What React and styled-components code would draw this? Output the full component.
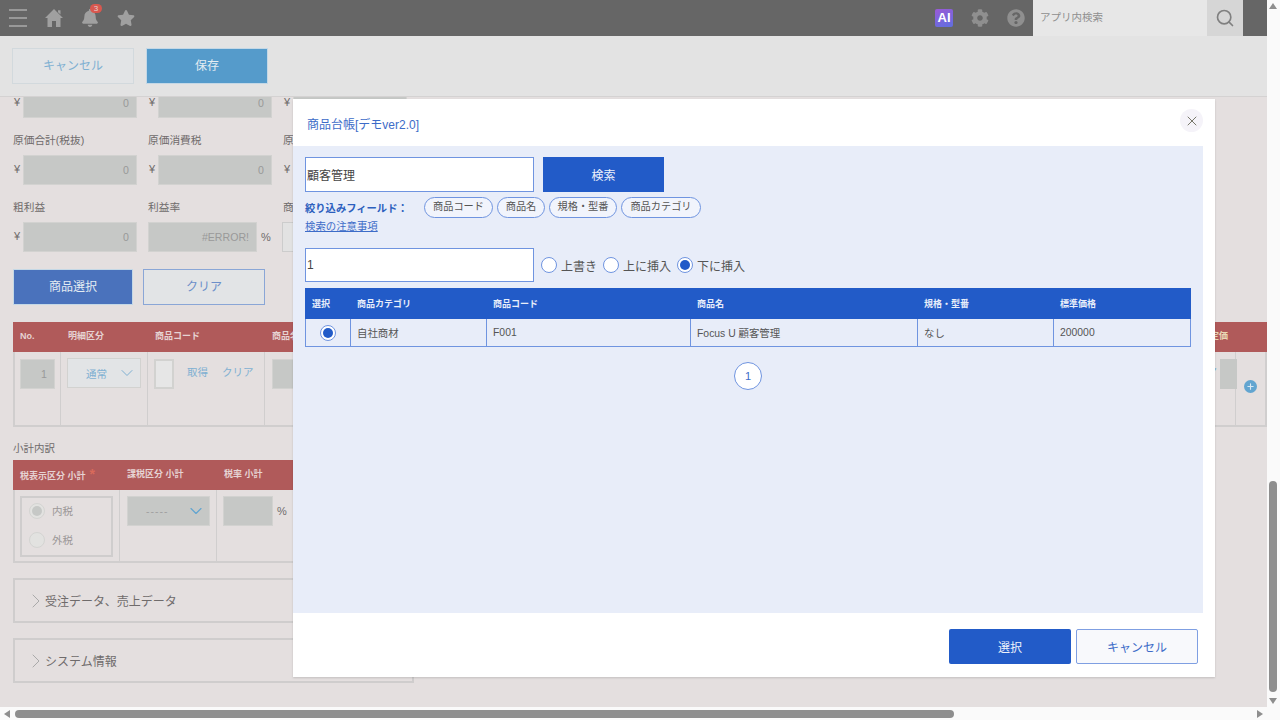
import React from "react";
import styled, { createGlobalStyle } from "styled-components";
import { FaBell, FaCog, FaQuestionCircle, FaStar } from "react-icons/fa";
import { ChevronDown, ChevronRight, Plus, Search, X } from "lucide-react";

const FONT = `"Liberation Sans", "Noto Sans CJK JP", sans-serif`;

const GlobalStyle = createGlobalStyle`
  html, body {
    margin: 0;
    padding: 0;
    height: 100%;
    overflow: hidden;
    font-family: ${FONT};
  }
  * {
    box-sizing: border-box;
  }
`;

const Shell = styled.div`
  position: relative;
  width: 1280px;
  height: 720px;
  display: grid;
  grid-template-columns: 1267px 13px;
  grid-template-rows: 707px 13px;
  background: #fafafa;
`;
const Main = styled.div`
  display: flex;
  flex-direction: column;
  overflow: hidden;
  background: #e4dfdf;
`;

const TopBar = styled.header`
  height: 36px;
  flex: none;
  display: flex;
  align-items: center;
  background: #666;
  color: #a0a0a0;
`;
const Burger = styled.span`
  width: 18px;
  height: 18px;
  margin-left: 9px;
  border-top: 2px solid #999;
  border-bottom: 2px solid #999;
  position: relative;
  &::after {
    content: "";
    position: absolute;
    left: 0;
    right: 0;
    top: 6px;
    height: 2px;
    background: #999;
  }
`;
const NavIcons = styled.div`
  display: flex;
  align-items: center;
  gap: 18px;
  margin-left: 18px;
  font-size: 18px;
`;
const BellWrap = styled.span`
  position: relative;
  display: flex;
`;
const Badge = styled.span`
  position: absolute;
  top: -5px;
  right: -3px;
  width: 12px;
  height: 9px;
  border-radius: 5px;
  background: #d9584f;
  color: #e8d0d0;
  font-size: 8px;
  line-height: 9px;
  text-align: center;
`;
const Spacer = styled.div`
  flex: 1;
`;
const AiBadge = styled.span`
  width: 18px;
  height: 18px;
  border-radius: 2px;
  background: linear-gradient(160deg, #9a5ad6, #5f6fe0);
  color: #fff;
  font-size: 13px;
  font-weight: 700;
  line-height: 18px;
  text-align: center;
`;
const ToolIcons = styled.div`
  display: flex;
  align-items: center;
  gap: 18px;
  margin-right: 8px;
  font-size: 18px;
  color: #8f8f8f;
`;
const SearchInput = styled.div`
  width: 174px;
  height: 36px;
  padding-left: 7px;
  background: #e7e7e7;
  color: #8f8f8f;
  font-size: 10.5px;
  line-height: 34px;
`;
const SearchButton = styled.div`
  width: 36px;
  height: 36px;
  margin-right: 24px;
  display: flex;
  align-items: center;
  justify-content: center;
  background: #d6d6d6;
  color: #808080;
`;

const ActionBar = styled.div`
  height: 61px;
  flex: none;
  display: flex;
  gap: 12px;
  padding: 12px 12px 0;
  background: #e3e3e3;
  border-bottom: 1px solid #d4d2d2;
  position: relative;
  z-index: 1;
`;
const Button = styled.button`
  width: ${(p) => p.$w || 122}px;
  height: 36px;
  padding: 0 0 3px;
  border: ${(p) => (p.$fill ? "1px solid #c4d8e6" : `1px solid ${p.$line || "#d2d9dd"}`)};
  background: ${(p) => p.$fill || "#e2e4e6"};
  color: ${(p) => (p.$fill ? "#e4ecf2" : p.$color || "#7fb0d2")};
  font-family: ${FONT};
  font-size: 12px;
`;

const Content = styled.div`
  flex: 1;
  min-height: 0;
  overflow: hidden;
  padding-left: 13px;
  color: #6f6b6b;
  font-size: 11px;
`;
const FieldGrid = styled.div`
  margin-top: -33px;
  display: grid;
  grid-template-columns: 135px 135px 135px;
  row-gap: 13px;
`;
const Field = styled.div`
  display: flex;
  flex-direction: column;
`;
const FieldLabel = styled.label`
  height: 18px;
  margin-bottom: 6px;
  font-size: 10.7px;
  line-height: 19px;
  white-space: nowrap;
`;
const FieldRow = styled.div`
  display: flex;
  align-items: center;
  height: 30px;
`;
const Yen = styled.span`
  width: 10px;
  padding-left: 1px;
  font-size: 11px;
  margin-top: -2px;
`;
const ReadOnly = styled.div`
  width: ${(p) => p.$w || 114}px;
  height: 30px;
  flex: none;
  padding-right: 7px;
  background: #c6c8c6;
  border: 1px solid #d2d2d0;
  color: #999;
  font-size: 10.6px;
  line-height: 28px;
  text-align: right;
`;
const Percent = styled.span`
  margin-left: 4px;
  font-size: 11px;
  line-height: 30px;
`;
const EmptyField = styled.div`
  width: 114px;
  height: 30px;
  margin-left: -1px;
  background: #e2e2e2;
  border: 1px solid #ccc;
`;

const PickRow = styled.div`
  display: flex;
  gap: 10px;
  margin-top: 17px;
`;

const RedTable = styled.div`
  width: ${(p) => p.$w}px;
  margin-top: ${(p) => p.$top || 0}px;
  display: grid;
  grid-template-columns: ${(p) => p.$cols};
  border-left: 2px solid #d0cece;
  border-right: 2px solid #d0cece;
  border-bottom: 2px solid #d0cece;
`;
const HeadCell = styled.div`
  height: 30px;
  padding-left: 7px;
  margin-right: ${(p) => p.$pull || 0}px;
  margin-left: ${(p) => (p.$first ? -2 : 0)}px;
  background: #b05a5a;
  color: #e6d3d3;
  font-size: 9px;
  font-weight: 700;
  line-height: 29px;
  white-space: nowrap;
  overflow: hidden;
`;
const HeadRight = styled.span`
  float: right;
  margin-right: 8px;
  color: #e9d8b4;
`;
const Req = styled.span`
  margin-left: 4px;
  color: #d96a5a;
  font-size: 14px;
`;
const BodyCell = styled.div`
  height: ${(p) => p.$h}px;
  padding: ${(p) => p.$pt || 6}px 6px 0 ${(p) => p.$pl || 6}px;
  border-right: ${(p) => (p.$last ? "none" : "1px solid #d0cece")};
  display: flex;
  align-items: flex-start;
`;
const Select = styled.div`
  width: ${(p) => p.$w}px;
  height: 30px;
  display: flex;
  align-items: center;
  justify-content: space-between;
  padding: 0 3px 0 18px;
  background: ${(p) => p.$bg};
  border: 1px solid #d2d2d0;
  color: ${(p) => p.$color};
  font-size: 10.5px;
  letter-spacing: ${(p) => p.$spread || 0}px;
`;
const SmallInput = styled.div`
  width: 20px;
  height: 30px;
  background: #e6e6e6;
  border: 2px solid #d2d2d0;
`;
const TextLink = styled.a`
  color: #7fb0d2;
  font-size: 10.5px;
  line-height: 26px;
  margin-left: ${(p) => p.$left}px;
  white-space: nowrap;
`;
const ClippedLink = styled(TextLink)`
  margin-left: auto;
  margin-right: 12px;
`;
const RightCell = styled.div`
  position: relative;
  display: flex;
  justify-content: center;
  align-items: center;
  height: 73px;
  padding-bottom: 4px;
`;
const RightInput = styled.div`
  position: absolute;
  top: 7px;
  left: -16px;
  width: 17px;
  height: 30px;
  background: #c6c8c6;
`;
const PlusDot = styled.span`
  width: 13px;
  height: 13px;
  border-radius: 50%;
  display: flex;
  align-items: center;
  justify-content: center;
  background: #62a5d0;
  color: #d8e8f2;
`;
const SectionLabel = styled.div`
  margin: 12px 0 3px;
  height: 18px;
  font-size: 10.5px;
  line-height: 18px;
`;
const RadioBox = styled.div`
  width: 94px;
  height: 61px;
  display: flex;
  flex-direction: column;
  justify-content: center;
  gap: 13px;
  padding: 0 0 3px 7px;
  border: 2px solid #cfcdcd;
`;
const RadioLine = styled.div`
  display: flex;
  align-items: center;
  gap: 7px;
  color: #9b9797;
  font-size: 10.5px;
`;
const GreyRadio = styled.span`
  width: 16px;
  height: 16px;
  border-radius: 50%;
  display: flex;
  align-items: center;
  justify-content: center;
  background: #e2e2e0;
  border: 1px solid #d4d4d2;
  &::after {
    content: "";
    width: 10px;
    height: 10px;
    border-radius: 50%;
    background: ${(p) => (p.$on ? "#c6c8c6" : "transparent")};
  }
`;
const Accordion = styled.div`
  width: 401px;
  height: 45px;
  margin-top: 15px;
  display: flex;
  align-items: center;
  padding-left: 9px;
  border: 2px solid #cfcdcd;
  font-size: 12px;
  color: #6f6b6b;
  svg {
    margin-right: -3px;
  }
`;

const VBar = styled.div`
  position: relative;
  display: flex;
  justify-content: center;
  padding-top: 481px;
  padding-right: 1px;
`;
const HBar = styled.div`
  position: relative;
  padding: 3px 0 0 15px;
`;
const VThumb = styled.div`
  width: 8px;
  height: 211px;
  border-radius: 4px;
  background: #8e8e8e;
`;
const HThumb = styled.div`
  width: 939px;
  height: 8px;
  border-radius: 4px;
  background: #8e8e8e;
`;
const Arrow = styled.span`
  position: absolute;
  width: 0;
  height: 0;
  ${(p) =>
    ({
      up: "top:3px;left:2px;border:4px solid transparent;border-top:0;border-bottom:6px solid #8e8e8e;",
      down: "bottom:3px;left:2px;border:4px solid transparent;border-bottom:0;border-top:6px solid #8e8e8e;",
      left: "left:4px;top:3px;border:4px solid transparent;border-left:0;border-right:6px solid #8e8e8e;",
      right: "right:4px;top:3px;border:4px solid transparent;border-right:0;border-left:6px solid #8e8e8e;",
    })[p.$dir]}
`;

const Modal = styled.section`
  position: absolute;
  left: 293px;
  top: 99px;
  z-index: 2;
  width: 922px;
  height: 578px;
  display: flex;
  flex-direction: column;
  background: #fff;
  box-shadow: 0 1px 2px rgba(0, 0, 0, 0.15);
`;
const ModalHeader = styled.div`
  height: 47px;
  flex: none;
  display: flex;
  align-items: center;
  justify-content: space-between;
  padding: 0 12px 4px 14px;
`;
const ModalTitle = styled.h2`
  margin: 6px 0 0;
  color: #3d6cc8;
  font-size: 12px;
  font-weight: 400;
`;
const CloseButton = styled.span`
  width: 23px;
  height: 23px;
  border-radius: 50%;
  display: flex;
  align-items: center;
  justify-content: center;
  background: #f5f3f9;
  color: #77776a;
`;
const ModalBody = styled.div`
  flex: 1;
  margin-right: 12px;
  padding: 11px 12px 0;
  background: #e8edf9;
  color: #555;
`;
const TextInput = styled.input`
  width: 229px;
  height: ${(p) => p.$h}px;
  padding: 0 1px;
  border: 1px solid #6f94e0;
  background: #fff;
  color: #444;
  font-family: ${FONT};
  font-size: 12px;
  outline: none;
`;
const SearchRow = styled.div`
  display: flex;
  gap: 9px;
`;
const BlueButton = styled.button`
  width: ${(p) => p.$w}px;
  height: 35px;
  padding: 0 0 1px;
  border: none;
  border-radius: ${(p) => p.$round || 0}px;
  background: #225bc8;
  color: #eef2fb;
  font-family: ${FONT};
  font-size: 12px;
`;
const FilterRow = styled.div`
  display: flex;
  align-items: center;
  height: 21px;
  margin-top: 5px;
`;
const FilterLabel = styled.span`
  width: 119px;
  color: #2c5fbe;
  font-size: 10.3px;
  font-weight: 700;
  white-space: nowrap;
`;
const Chips = styled.div`
  display: flex;
  gap: 4px;
`;
const Chip = styled.span`
  width: ${(p) => p.$w}px;
  height: 21px;
  border: 1px solid #6f94e0;
  border-radius: 11px;
  background: #f1f4fc;
  color: #555;
  font-size: 10.2px;
  line-height: 18px;
  text-align: center;
  white-space: nowrap;
`;
const NoteLink = styled.a`
  display: block;
  height: 16px;
  margin-top: 1px;
  color: #3d6cc8;
  font-size: 10.4px;
  line-height: 16px;
  text-decoration: underline;
`;
const InsertRow = styled.div`
  display: flex;
  align-items: center;
  margin-top: 13px;
`;
const RadioGroup = styled.div`
  display: flex;
  align-items: center;
  gap: 6px;
  margin-left: 7px;
`;
const RadioItem = styled.label`
  display: flex;
  align-items: center;
  gap: 4px;
  color: #555;
  font-size: 12px;
  white-space: nowrap;
`;
const Radio = styled.span`
  width: 16px;
  height: 16px;
  flex: none;
  border-radius: 50%;
  display: inline-flex;
  align-items: center;
  justify-content: center;
  border: 1px solid #6f94e0;
  background: #fff;
  &::after {
    content: "";
    width: 10px;
    height: 10px;
    border-radius: 50%;
    background: ${(p) => (p.$on ? "#225bc8" : "transparent")};
  }
`;
const ResultTable = styled.table`
  width: 885px;
  margin-top: 6px;
  table-layout: fixed;
  border-collapse: collapse;
  th {
    height: 30px;
    padding: 0 6px;
    background: #225bc8;
    border: 1px solid #225bc8;
    color: #e8eefa;
    font-size: 9px;
    font-weight: 700;
    text-align: left;
  }
  td {
    height: 28px;
    padding: 0 6px;
    border: 1px solid #6f94e0;
    color: #555;
    font-size: 10.4px;
  }
`;
const RadioCell = styled.td`
  && {
    padding: 0;
    text-align: center;
  }
  span {
    vertical-align: middle;
  }
`;
const Pager = styled.div`
  margin-top: 15px;
  display: flex;
  justify-content: center;
`;
const PageDot = styled.span`
  width: 28px;
  height: 28px;
  border-radius: 50%;
  border: 1px solid #6f94e0;
  background: #fff;
  color: #3d6cc8;
  font-size: 11px;
  line-height: 26px;
  text-align: center;
`;
const ModalFooter = styled.div`
  height: 64px;
  flex: none;
  display: flex;
  justify-content: flex-end;
  gap: 5px;
  padding: 16px 17px 0 0;
`;
const GhostButton = styled.button`
  width: 122px;
  height: 35px;
  padding: 0;
  border: 1px solid #7f9fe2;
  border-radius: 2px;
  background: #f8f9fc;
  color: #3d6cc8;
  font-family: ${FONT};
  font-size: 12px;
`;

const HomeIcon = () => (
  <svg width="18" height="18" viewBox="0 0 18 18" fill="currentColor">
    <path d="M9 0 18 9H15.5V18H11V12H7V18H2.5V9H0ZM13 1.2H15.5V5.6L13 3.2Z" />
  </svg>
);

const App = () => {
  return (
    <Shell>
      <GlobalStyle />
      <Main>
        <TopBar>
          <Burger />
          <NavIcons>
            <HomeIcon />
            <BellWrap>
              <FaBell />
              <Badge>3</Badge>
            </BellWrap>
            <FaStar />
          </NavIcons>
          <Spacer />
          <ToolIcons>
            <AiBadge>AI</AiBadge>
            <FaCog />
            <FaQuestionCircle />
          </ToolIcons>
          <SearchInput>アプリ内検索</SearchInput>
          <SearchButton>
            <Search size={20} strokeWidth={2} />
          </SearchButton>
        </TopBar>
        <ActionBar>
          <Button>キャンセル</Button>
          <Button $fill="#559bcb">保存</Button>
        </ActionBar>
        <Content>
          <FieldGrid>
            <Field>
              <FieldLabel />
              <FieldRow>
                <Yen>¥</Yen>
                <ReadOnly>0</ReadOnly>
              </FieldRow>
            </Field>
            <Field>
              <FieldLabel />
              <FieldRow>
                <Yen>¥</Yen>
                <ReadOnly>0</ReadOnly>
              </FieldRow>
            </Field>
            <Field>
              <FieldLabel />
              <FieldRow>
                <Yen>¥</Yen>
                <ReadOnly>0</ReadOnly>
              </FieldRow>
            </Field>
            <Field>
              <FieldLabel>原価合計(税抜)</FieldLabel>
              <FieldRow>
                <Yen>¥</Yen>
                <ReadOnly>0</ReadOnly>
              </FieldRow>
            </Field>
            <Field>
              <FieldLabel>原価消費税</FieldLabel>
              <FieldRow>
                <Yen>¥</Yen>
                <ReadOnly>0</ReadOnly>
              </FieldRow>
            </Field>
            <Field>
              <FieldLabel>原価合計</FieldLabel>
              <FieldRow>
                <Yen>¥</Yen>
                <ReadOnly>0</ReadOnly>
              </FieldRow>
            </Field>
            <Field>
              <FieldLabel>粗利益</FieldLabel>
              <FieldRow>
                <Yen>¥</Yen>
                <ReadOnly>0</ReadOnly>
              </FieldRow>
            </Field>
            <Field>
              <FieldLabel>利益率</FieldLabel>
              <FieldRow>
                <ReadOnly $w={109}>#ERROR!</ReadOnly>
                <Percent>%</Percent>
              </FieldRow>
            </Field>
            <Field>
              <FieldLabel>商品</FieldLabel>
              <FieldRow>
                <EmptyField />
              </FieldRow>
            </Field>
          </FieldGrid>

          <PickRow>
            <Button $fill="#4a72bc" $w={120}>
              商品選択
            </Button>
            <Button $line="#8aa6d6" $color="#6c8fc9">
              クリア
            </Button>
          </PickRow>

          <RedTable $w={1254} $top={17} $cols="46px 87px 117px 1fr 29px">
            <HeadCell $first>No.</HeadCell>
            <HeadCell>明細区分</HeadCell>
            <HeadCell>商品コード</HeadCell>
            <HeadCell>
              商品名
              <HeadRight>定価</HeadRight>
            </HeadCell>
            <HeadCell $pull={-2} />
            <BodyCell $h={73} $pt={7} $pl={5}>
              <ReadOnly $w={35}>1</ReadOnly>
            </BodyCell>
            <BodyCell $h={73} $pt={6}>
              <Select $w={75} $bg="#e2e4e6" $color="#7fb0d2">
                通常
                <ChevronDown size={20} strokeWidth={1.2} />
              </Select>
            </BodyCell>
            <BodyCell $h={73} $pt={7}>
              <SmallInput />
              <TextLink $left={13}>取得</TextLink>
              <TextLink $left={14}>クリア</TextLink>
            </BodyCell>
            <BodyCell $h={73} $pt={7} $pl={7}>
              <ReadOnly $w={60} />
              <ClippedLink>クリア</ClippedLink>
            </BodyCell>
            <RightCell>
              <RightInput />
              <PlusDot>
                <Plus size={9} strokeWidth={3} />
              </PlusDot>
            </RightCell>
          </RedTable>

          <SectionLabel>小計内訳</SectionLabel>
          <RedTable $w={401} $cols="105px 97px 1fr">
            <HeadCell $first>
              税表示区分 小計<Req>*</Req>
            </HeadCell>
            <HeadCell>課税区分 小計</HeadCell>
            <HeadCell>税率 小計</HeadCell>
            <BodyCell $h={71} $pl={5}>
              <RadioBox>
                <RadioLine>
                  <GreyRadio $on />
                  内税
                </RadioLine>
                <RadioLine>
                  <GreyRadio />
                  外税
                </RadioLine>
              </RadioBox>
            </BodyCell>
            <BodyCell $h={71} $pl={7}>
              <Select $w={84} $bg="#c6c8c6" $color="#a0a0a0" $spread={1}>
                -----
                <ChevronDown size={20} strokeWidth={1.4} color="#62a5d0" />
              </Select>
            </BodyCell>
            <BodyCell $h={71} $last>
              <ReadOnly $w={50} />
              <Percent>%</Percent>
            </BodyCell>
          </RedTable>

          <Accordion>
            <ChevronRight size={24} strokeWidth={1} color="#aaa" />
            受注データ、売上データ
          </Accordion>
          <Accordion>
            <ChevronRight size={24} strokeWidth={1} color="#aaa" />
            システム情報
          </Accordion>
        </Content>
      </Main>

      <VBar>
        <Arrow $dir="up" />
        <VThumb />
        <Arrow $dir="down" />
      </VBar>
      <HBar>
        <Arrow $dir="left" />
        <HThumb />
        <Arrow $dir="right" />
      </HBar>
      <div />

      <Modal>
        <ModalHeader>
          <ModalTitle>商品台帳[デモver2.0]</ModalTitle>
          <CloseButton>
            <X size={16} strokeWidth={1.5} />
          </CloseButton>
        </ModalHeader>
        <ModalBody>
          <SearchRow>
            <TextInput $h={35} readOnly value="顧客管理" />
            <BlueButton $w={121}>検索</BlueButton>
          </SearchRow>
          <FilterRow>
            <FilterLabel>絞り込みフィールド：</FilterLabel>
            <Chips>
              <Chip $w={69}>商品コード</Chip>
              <Chip $w={48}>商品名</Chip>
              <Chip $w={68}>規格・型番</Chip>
              <Chip $w={80}>商品カテゴリ</Chip>
            </Chips>
          </FilterRow>
          <NoteLink>検索の注意事項</NoteLink>
          <InsertRow>
            <TextInput $h={34} readOnly value="1" />
            <RadioGroup>
              <RadioItem>
                <Radio />
                上書き
              </RadioItem>
              <RadioItem>
                <Radio />
                上に挿入
              </RadioItem>
              <RadioItem>
                <Radio $on />
                下に挿入
              </RadioItem>
            </RadioGroup>
          </InsertRow>
          <ResultTable>
            <colgroup>
              <col width="45" />
              <col width="136" />
              <col width="204" />
              <col width="227" />
              <col width="136" />
              <col width="137" />
            </colgroup>
            <thead>
              <tr>
                <th>選択</th>
                <th>商品カテゴリ</th>
                <th>商品コード</th>
                <th>商品名</th>
                <th>規格・型番</th>
                <th>標準価格</th>
              </tr>
            </thead>
            <tbody>
              <tr>
                <RadioCell>
                  <Radio $on />
                </RadioCell>
                <td>自社商材</td>
                <td>F001</td>
                <td>Focus U 顧客管理</td>
                <td>なし</td>
                <td>200000</td>
              </tr>
            </tbody>
          </ResultTable>
          <Pager>
            <PageDot>1</PageDot>
          </Pager>
        </ModalBody>
        <ModalFooter>
          <BlueButton $w={122} $round={2}>
            選択
          </BlueButton>
          <GhostButton>キャンセル</GhostButton>
        </ModalFooter>
      </Modal>
    </Shell>
  );
};

export default App;
